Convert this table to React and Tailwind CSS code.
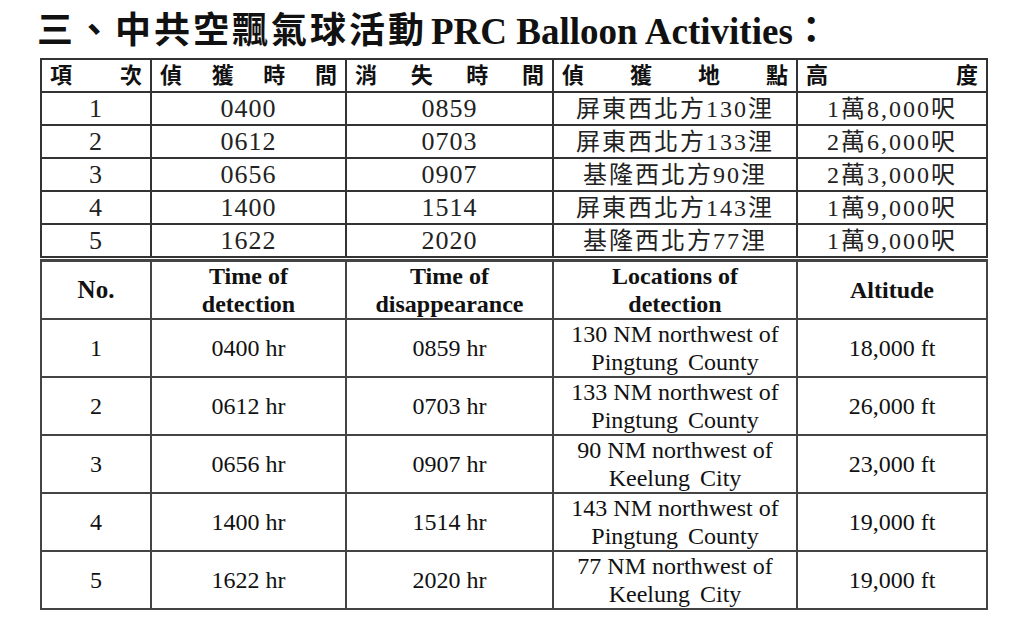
const zhRows = [
  ["1", "0400", "0859", "屏東西北方130浬", "1萬8,000呎"],
  ["2", "0612", "0703", "屏東西北方133浬", "2萬6,000呎"],
  ["3", "0656", "0907", "基隆西北方90浬", "2萬3,000呎"],
  ["4", "1400", "1514", "屏東西北方143浬", "1萬9,000呎"],
  ["5", "1622", "2020", "基隆西北方77浬", "1萬9,000呎"],
];

const enRows = [
  ["1", "0400 hr", "0859 hr", "130 NM northwest of", "Pingtung County", "18,000 ft"],
  ["2", "0612 hr", "0703 hr", "133 NM northwest of", "Pingtung County", "26,000 ft"],
  ["3", "0656 hr", "0907 hr", "90 NM northwest of", "Keelung City", "23,000 ft"],
  ["4", "1400 hr", "1514 hr", "143 NM northwest of", "Pingtung County", "19,000 ft"],
  ["5", "1622 hr", "2020 hr", "77 NM northwest of", "Keelung City", "19,000 ft"],
];

const zhHead = [
  ["項", "次"],
  ["偵", "獲", "時", "間"],
  ["消", "失", "時", "間"],
  ["偵", "獲", "地", "點"],
  ["高", "度"],
];

const cols = ["w-[110px]", "w-[195px]", "w-[207px]", "w-[244px]", "w-[190px]"];

const serif = { fontFamily: '"Liberation Serif", "Noto Sans CJK TC", serif' };

export default function App() {
  return (
    <div className="w-[1024px] h-[622px] bg-white text-[#111] overflow-hidden" style={serif}>
      <div className="pl-[37px] pt-[4px] h-[58px] flex items-center font-bold leading-none">
        <span className="text-[36px] tracking-[3px]">三、中共空飄氣球活動</span>
        <span className="ml-[4px] text-[37px]">PRC Balloon Activities：</span>
      </div>

      <div className="ml-[40px] w-[946px]">
        <table className="w-[946px] table-fixed border-collapse border-2 border-[#333]">
          <colgroup>
            {cols.map((c, i) => (
              <col key={i} className={c} />
            ))}
          </colgroup>
          <thead>
            <tr className="h-[33px]">
              {zhHead.map((chars, i) => (
                <th key={i} className="border-2 border-[#333] px-[8px] p-0 font-bold text-[22px] leading-none">
                  <div className="flex justify-between">
                    {chars.map((ch, j) => (
                      <span key={j}>{ch}</span>
                    ))}
                  </div>
                </th>
              ))}
            </tr>
          </thead>
          <tbody>
            {zhRows.map((r, i) => (
              <tr key={i} className="h-[33px]">
                {r.map((v, j) => (
                  <td
                    key={j}
                    className={
                      "border-2 border-[#333] p-0 text-center leading-none text-[#222] " +
                      (j < 3 ? "text-[26px] tracking-[1px]" : "text-[24px] tracking-[2px]")
                    }
                  >
                    {v}
                  </td>
                ))}
              </tr>
            ))}
          </tbody>
        </table>

        <table className="w-[944px] table-fixed border-collapse border-2 border-[#444] border-t-[3px] mt-[1px] text-[24px] leading-[28px]">
          <colgroup>
            {cols.map((c, i) => (
              <col key={i} className={c} />
            ))}
          </colgroup>
          <thead>
            <tr className="h-[58px] font-bold text-[24px] leading-[28px]">
              <th className="border-2 border-[#444] p-0 text-[25px]">No.</th>
              <th className="border-2 border-[#444] p-0">
                Time of
                <br />
                detection
              </th>
              <th className="border-2 border-[#444] p-0">
                Time of
                <br />
                disappearance
              </th>
              <th className="border-2 border-[#444] p-0">
                Locations of
                <br />
                detection
              </th>
              <th className="border-2 border-[#444] p-0">Altitude</th>
            </tr>
          </thead>
          <tbody>
            {enRows.map((r, i) => (
              <tr key={i} className="h-[57px]">
                <td className="border-2 border-[#444] p-0 text-center">{r[0]}</td>
                <td className="border-2 border-[#444] p-0 text-center">{r[1]}</td>
                <td className="border-2 border-[#444] p-0 text-center">{r[2]}</td>
                <td className="border-2 border-[#444] p-0 text-center">
                  {r[3]}
                  <br />
                  <span className="[word-spacing:4px]">{r[4]}</span>
                </td>
                <td className="border-2 border-[#444] p-0 text-center">{r[5]}</td>
              </tr>
            ))}
          </tbody>
        </table>
      </div>
    </div>
  );
}
